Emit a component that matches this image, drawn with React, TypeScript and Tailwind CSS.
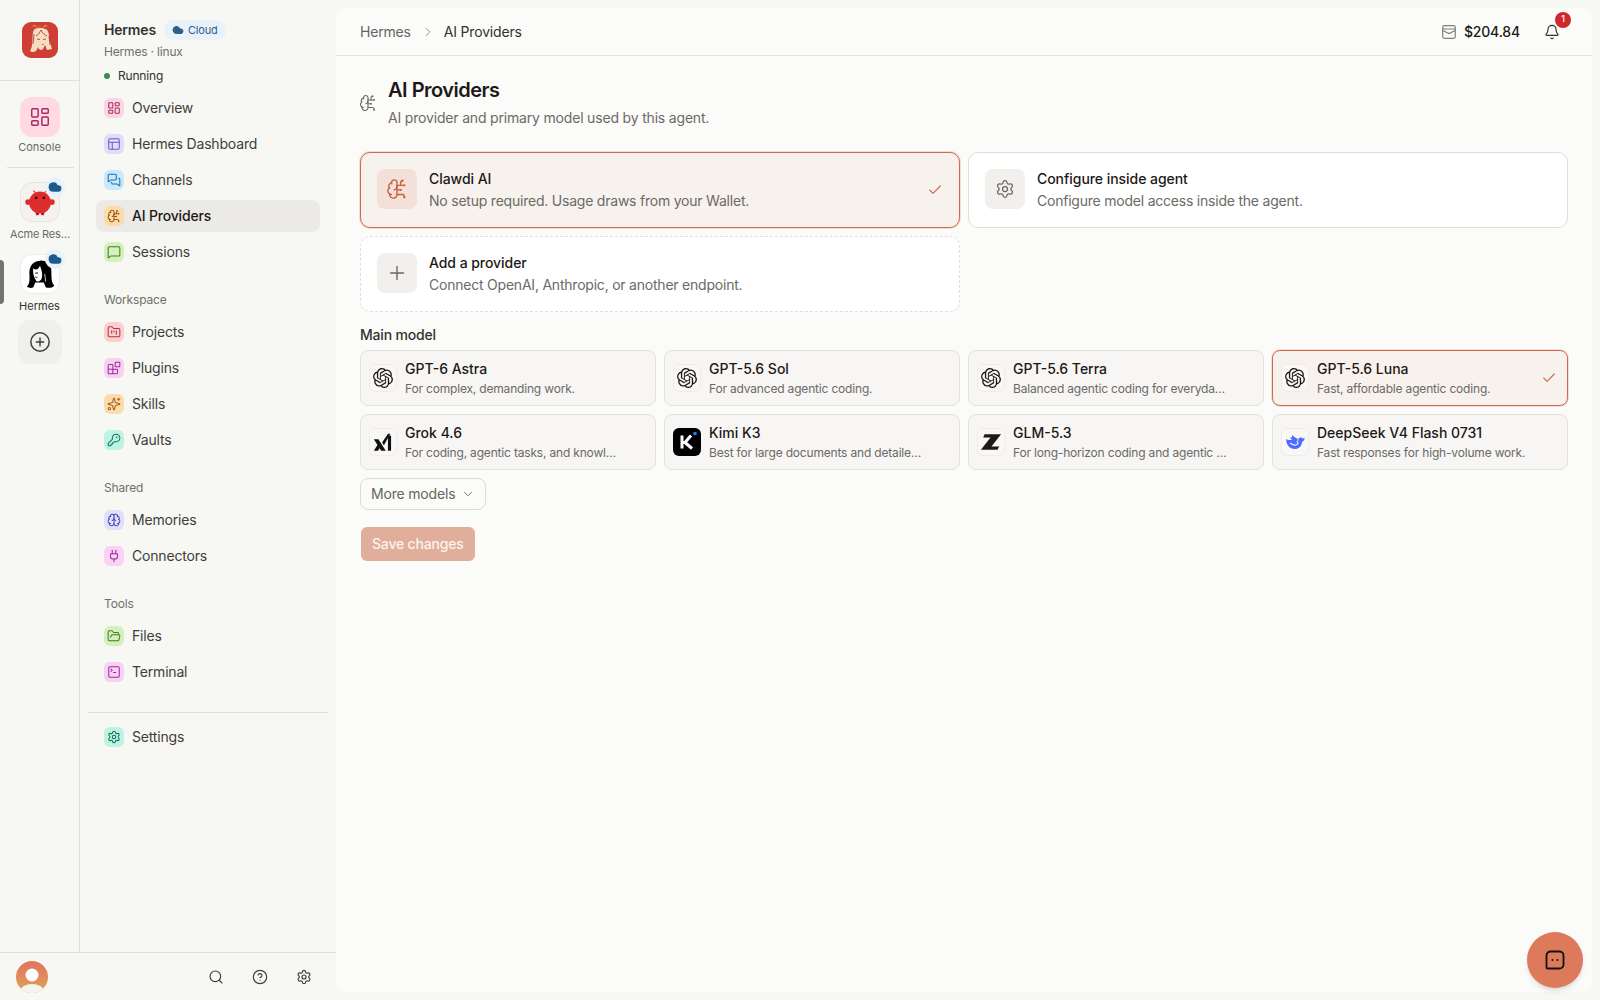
import React from 'react';
import {
  Bell, Blocks, Brain, BrainCircuit, Check, ChevronDown, ChevronRight, CircleHelp, CirclePlus, Cloud,
  FolderKanban, FolderOpen, KeyRound, LayoutDashboard, MessageSquare, MessagesSquare, PanelsTopLeft,
  Plug, Plus, Search, Settings, Sparkles, SquareTerminal,
} from 'lucide-react';

type NavItem = { label: string; icon: React.ElementType; tile: string; active?: boolean };

const mainNav: NavItem[] = [
  { label: 'Overview', icon: LayoutDashboard, tile: 'bg-[#fbd5e3] text-[#a82a5e]' },
  { label: 'Hermes Dashboard', icon: PanelsTopLeft, tile: 'bg-[#e0dcfb] text-[#6a5bc0]' },
  { label: 'Channels', icon: MessagesSquare, tile: 'bg-[#c8e8fb] text-[#1f6ea8]' },
  { label: 'AI Providers', icon: BrainCircuit, tile: 'bg-[#fddcab] text-[#9a5a12]', active: true },
  { label: 'Sessions', icon: MessageSquare, tile: 'bg-[#d5f0bd] text-[#3f7a22]' },
];
const workspaceNav: NavItem[] = [
  { label: 'Projects', icon: FolderKanban, tile: 'bg-[#fcd0d0] text-[#b4323c]' },
  { label: 'Plugins', icon: Blocks, tile: 'bg-[#f8d0f5] text-[#9a2d94]' },
  { label: 'Skills', icon: Sparkles, tile: 'bg-[#fddcab] text-[#a0601a]' },
  { label: 'Vaults', icon: KeyRound, tile: 'bg-[#bff3e1] text-[#0f7060]' },
];
const sharedNav: NavItem[] = [
  { label: 'Memories', icon: Brain, tile: 'bg-[#e0e0fd] text-[#4f46b0]' },
  { label: 'Connectors', icon: Plug, tile: 'bg-[#fad2f8] text-[#9a2a92]' },
];
const toolsNav: NavItem[] = [
  { label: 'Files', icon: FolderOpen, tile: 'bg-[#d5f0bd] text-[#3f7a22]' },
  { label: 'Terminal', icon: SquareTerminal, tile: 'bg-[#f8d0f5] text-[#9a2d94]' },
];

const OpenAILogo = () => (
  <svg viewBox="0 0 24 24" className="w-[20px] h-[20px]" fill="#1c1917">
    <path d="M22.2819 9.8211a5.9847 5.9847 0 0 0-.5157-4.9108 6.0462 6.0462 0 0 0-6.5098-2.9A6.0651 6.0651 0 0 0 4.9807 4.1818a5.9847 5.9847 0 0 0-3.9977 2.9 6.0462 6.0462 0 0 0 .7427 7.0966 5.98 5.98 0 0 0 .511 4.9107 6.051 6.051 0 0 0 6.5146 2.9001A5.9847 5.9847 0 0 0 13.2599 24a6.0557 6.0557 0 0 0 5.7718-4.2058 5.9894 5.9894 0 0 0 3.9977-2.9001 6.0557 6.0557 0 0 0-.7475-7.0729zm-9.022 12.6081a4.4755 4.4755 0 0 1-2.8764-1.0408l.1419-.0804 4.7783-2.7582a.7948.7948 0 0 0 .3927-.6813v-6.7369l2.02 1.1686a.071.071 0 0 1 .038.052v5.5826a4.504 4.504 0 0 1-4.4945 4.4944zm-9.6607-4.1254a4.4708 4.4708 0 0 1-.5346-3.0137l.142.0852 4.783 2.7582a.7712.7712 0 0 0 .7806 0l5.8428-3.3685v2.3324a.0804.0804 0 0 1-.0332.0615L9.74 19.9502a4.4992 4.4992 0 0 1-6.1408-1.6464zM2.3408 7.8956a4.485 4.485 0 0 1 2.3655-1.9728V11.6a.7664.7664 0 0 0 .3879.6765l5.8144 3.3543-2.0201 1.1685a.0757.0757 0 0 1-.071 0l-4.8303-2.7865A4.504 4.504 0 0 1 2.3408 7.872zm16.5963 3.8558L13.1038 8.364 15.1192 7.2a.0757.0757 0 0 1 .071 0l4.8303 2.7913a4.4944 4.4944 0 0 1-.6765 8.1042v-5.6772a.79.79 0 0 0-.407-.667zm2.0107-3.0231l-.142-.0852-4.7735-2.7818a.7759.7759 0 0 0-.7854 0L9.409 9.2297V6.8974a.0662.0662 0 0 1 .0284-.0615l4.8303-2.7866a4.4992 4.4992 0 0 1 6.6802 4.66zM8.3065 12.863l-2.02-1.1638a.0804.0804 0 0 1-.038-.0567V6.0742a4.4992 4.4992 0 0 1 7.3757-3.4537l-.142.0805L8.704 5.459a.7948.7948 0 0 0-.3927.6813zm1.0976-2.3654l2.602-1.4998 2.6069 1.4998v2.9994l-2.5974 1.4997-2.6067-1.4997Z" />
  </svg>
);

const GrokLogo = () => (
  <svg viewBox="0 0 24 24" className="w-[22px] h-[22px]" fill="#111">
    <polygon points="2,9 7,9 15,21.500 10,21.500" />
    <polygon points="2,21.500 6.500,21.500 9,17.800 6.600,14.300" />
    <polygon points="11,12.500 17.500,3 20,3 13,15.500" />
    <rect x="17.400" y="5" width="3.400" height="16.500" />
  </svg>
);

const KimiLogo = () => (
  <svg viewBox="0 0 28 28" className="w-[28px] h-[28px]">
    <rect width="28" height="28" rx="6" fill="#000" />
    <path d="M9 7.500v13M9 14.500h3l6-7M12 14.500l7 6" stroke="#fff" strokeWidth="3" fill="none" />
    <circle cx="22" cy="5.500" r="1.800" fill="#1783ff" />
  </svg>
);

const GlmLogo = () => (
  <svg viewBox="0 0 24 24" className="w-[22px] h-[22px]" fill="#1c1917">
    <polygon points="5,3.500 23,3.500 12.500,17 21,17 19,20.500 1,20.500 11.500,7 3.500,7" />
  </svg>
);

const DeepSeekLogo = () => (
  <svg viewBox="0 0 24 24" className="w-[20px] h-[20px]" fill="#4d6bfe">
    <path d="M1.500 8.500C1 15 5.500 20.500 12 20.500c4.500 0 7.500-3 8.300-7.500.2-1.300.9-1.800 2-2.500.8-.6 1.200-2 1.200-3.500-.8.7-1.800 1-2.800.9-.3-1-1-1.700-2-2 0 .6-.1 1-.4 1.400-1-.2-2 .2-2.600 1.200C13 7 10.500 5.500 8.500 3.500c-.4 1-.2 2 .5 3-1-.2-2 0-2.800.5.5 1 1.300 1.800 2.500 2.500C5.500 10 3 9.500 1.500 8.500z" />
    <path d="M6 13c3 3 7 3.500 9 1.500 1-1 .5-2.500-1-3" stroke="#fff" fill="none" strokeWidth="1.300" />
    <circle cx="15.500" cy="9.500" r="0.900" fill="#fff" />
  </svg>
);

const models = [
  { name: 'GPT-6 Astra', desc: 'For complex, demanding work.', logo: <OpenAILogo /> },
  { name: 'GPT-5.6 Sol', desc: 'For advanced agentic coding.', logo: <OpenAILogo /> },
  { name: 'GPT-5.6 Terra', desc: 'Balanced agentic coding for everyda…', logo: <OpenAILogo /> },
  { name: 'GPT-5.6 Luna', desc: 'Fast, affordable agentic coding.', logo: <OpenAILogo />, selected: true },
  { name: 'Grok 4.6', desc: 'For coding, agentic tasks, and knowl…', logo: <GrokLogo /> },
  { name: 'Kimi K3', desc: 'Best for large documents and detaile…', logo: <KimiLogo />, bare: true },
  { name: 'GLM-5.3', desc: 'For long-horizon coding and agentic …', logo: <GlmLogo /> },
  { name: 'DeepSeek V4 Flash 0731', desc: 'Fast responses for high-volume work.', logo: <DeepSeekLogo /> },
];

const BrandAvatar = () => (
  <svg viewBox="0 0 36 36" className="w-[36px] h-[36px] rounded-[9px]">
    <rect width="36" height="36" fill="#cf3f33" />
    <path d="M11 4.500c1-2 3-1 3 .5M25 4.500c-1-2-3-1-3 .5" stroke="#f3c9b0" fill="none" strokeWidth="0.800" />
    <path d="M11 10c1-4 5-6 8-5 5 0 8 4 8 9 0 5 2 9 3 13l-5 1-2-5-2 4c-2 2-4 1-5-2-1 3-2 5-6 5l-2-1c3-4 2-11 3-19z" fill="#f6dcc0" />
    <path d="M14 14c2-1 4-4 5-6 1 3 4 5 6 6M15 17l3 .5M21 17.500l3-.5M20 22.500h1.500M12 12l-1 10M27 14l1 9" stroke="#a8352c" strokeWidth="0.800" fill="none" />
    <path d="M12 7c3-2 9-2 12 0" stroke="#c23a30" strokeWidth="1" fill="none" />
  </svg>
);

const MascotAvatar = () => (
  <svg viewBox="0 0 40 40" className="w-[38px] h-[38px]">
    <ellipse cx="7.500" cy="20" rx="3" ry="3" fill="#d92b2b" />
    <ellipse cx="32.500" cy="20" rx="3" ry="3" fill="#d92b2b" />
    <path d="M15 10l-2-2M25 10l2-2" stroke="#e03a3a" strokeWidth="1.200" />
    <rect x="15.500" y="29" width="3.500" height="5" rx="1.500" fill="#b81e1e" />
    <rect x="21" y="29" width="3.500" height="5" rx="1.500" fill="#b81e1e" />
    <circle cx="20" cy="20.500" r="11.500" fill="#dd2c2c" />
    <circle cx="16" cy="15.500" r="1.400" fill="#2a1414" />
    <circle cx="24" cy="15.500" r="1.400" fill="#2a1414" />
  </svg>
);

const HermesAvatar = () => (
  <svg viewBox="0 0 40 40" className="w-[38px] h-[38px]">
    <path d="M6 33c3-2 3-6 3-11-1-9 2-15 11-16 8-1 12 4 12 11 0 7 0 12 3 15-2 3-7 3-9 2l-2-5H15l-2 5c-2 1-5 1-7-1z" fill="#000" />
    <path d="M13 14c3 3 6 0 7-3 1 4 3 7 2 13-1 4-5 5-6 3-2-3-4-8-3-13z" fill="#fff" />
    <path d="M15 19h3M15 23c1 1 2 1 2 0M25 14l1 14M28 16l-1 11" stroke="#000" strokeWidth="1" fill="none" />
    <path d="M25 20l1 8" stroke="#fff" strokeWidth="0.800" fill="none" />
    <path d="M13 7c4-3 10-3 14 0" stroke="#fff" strokeWidth="1" fill="none" />
  </svg>
);

const CloudBadge = () => (
  <span className="absolute -top-[6px] -right-[6px] w-[20px] h-[20px] rounded-full bg-[#e8f2fb] flex items-center justify-center">
    <Cloud size={14} className="text-[#1f5a8a]" fill="currentColor" />
  </span>
);

const NavRow = ({ item }: { item: NavItem }) => {
  const Icon = item.icon;
  return (
    <div className={`flex items-center gap-2 h-8 px-2 rounded-lg ${item.active ? 'bg-[#ebeae6] text-[#1c1917] font-medium' : 'text-[#3f3e3a]'}`}>
      <span className={`w-5 h-5 rounded-md flex items-center justify-center ${item.tile}`}>
        <Icon size={14} strokeWidth={1.75} />
      </span>
      <span className="text-sm">{item.label}</span>
    </div>
  );
};

const NavSection = ({ title, items }: { title: string; items: NavItem[] }) => (
  <div className="mt-6">
    <div className="px-2 h-4 leading-4 text-xs text-[#706f6a] mb-2">{title}</div>
    <div className="flex flex-col gap-1">
      {items.map((item) => <NavRow key={item.label} item={item} />)}
    </div>
  </div>
);

const Rail = () => (
  <div className="w-[80px] shrink-0 border-r border-[#e0dfdb] flex flex-col">
    <div className="h-[81px] shrink-0 border-b border-[#e0dfdb] flex items-center justify-center pl-px">
      <BrandAvatar />
    </div>
    <div className="flex flex-col items-center pl-px">
      <div className="mt-4 w-10 h-10 rounded-xl bg-[#ffd9e4] text-[#a82a5e] flex items-center justify-center">
        <LayoutDashboard size={22} strokeWidth={1.6} />
      </div>
      <div className="mt-[2px] -ml-px h-4 leading-4 text-[11px] tracking-normal text-[#6b6a65]">Console</div>
      <div className="mt-3 w-[67px] h-px bg-[#e0dfdb]" />
      <div className="relative mt-[14px] w-10 h-10 rounded-xl bg-[#f3f2ef] border border-[#e6e5e1] flex items-center justify-center">
        <MascotAvatar />
        <CloudBadge />
      </div>
      <div className="mt-1 h-4 leading-4 text-[11px] text-[#6b6a65] text-center">Acme Res…</div>
      <div className="relative mt-3 w-10 h-10 rounded-xl bg-white border border-[#ecebe7] flex items-center justify-center">
        <HermesAvatar />
        <CloudBadge />
      </div>
      <div className="mt-1 -ml-px h-4 leading-4 text-[11px] tracking-normal text-[#33322e]">Hermes</div>
      <div className="mt-[6px] w-11 h-11 rounded-xl bg-[#efefec] text-[#3f3e3a] flex items-center justify-center">
        <CirclePlus size={22} strokeWidth={1.6} />
      </div>
    </div>
    <span className="absolute left-0 top-[260px] w-1 h-[44px] rounded-r bg-[#74736c]" />
  </div>
);

const Sidebar = () => (
  <div className="flex-1 min-w-0 px-4 pt-5 flex flex-col">
    <div className="px-2">
      <div className="flex items-center gap-2 h-5">
        <span className="text-sm font-semibold text-[#33322e]">Hermes</span>
        <span className="h-5 px-2 rounded-full bg-[#e8f2fb] text-[#2d5f8a] flex items-center gap-1 text-[11px]">
          <Cloud size={12} fill="currentColor" /> Cloud
        </span>
      </div>
      <div className="mt-[4px] h-4 leading-4 text-xs text-[#706f6a]">Hermes · linux</div>
      <div className="mt-[8px] h-4 leading-4 flex items-center gap-2 text-xs text-[#33322e]">
        <span className="w-[6px] h-[6px] rounded-full bg-[#3f8a55]" /> Running
      </div>
    </div>
    <div className="mt-2 flex flex-col gap-1">
      {mainNav.map((item) => <NavRow key={item.label} item={item} />)}
    </div>
    <NavSection title="Workspace" items={workspaceNav} />
    <NavSection title="Shared" items={sharedNav} />
    <NavSection title="Tools" items={toolsNav} />
    <div className="mt-6 -mx-2 h-px bg-[#e0dfdb]" />
    <div className="mt-2">
      <NavRow item={{ label: 'Settings', icon: Settings, tile: 'bg-[#bff3e1] text-[#0f7060]' }} />
    </div>
  </div>
);

const Footer = () => (
  <div className="h-[48px] shrink-0 border-t border-[#e0dfdb] flex items-center pl-4 pr-[24px]">
    <svg viewBox="0 0 32 32" className="w-8 h-8 rounded-full">
      <defs>
        <linearGradient id="avatarBg" x1="0" y1="0" x2="0" y2="1">
          <stop offset="0" stopColor="#e0735a" />
          <stop offset="1" stopColor="#dea35c" />
        </linearGradient>
      </defs>
      <rect width="32" height="32" fill="url(#avatarBg)" />
      <circle cx="16" cy="14" r="6.500" fill="#fff" />
      <ellipse cx="16" cy="30" rx="11.500" ry="7" fill="#f5f4f0" />
    </svg>
    <div className="ml-auto flex items-center gap-7 text-[#3f3e3a]">
      <Search size={16} strokeWidth={1.75} />
      <CircleHelp size={16} strokeWidth={1.75} />
      <Settings size={16} strokeWidth={1.75} />
    </div>
  </div>
);

const WalletIcon = () => (
  <svg viewBox="0 0 14 14" className="w-[14px] h-[14px]" fill="none" stroke="#80807a" strokeWidth="1.200">
    <rect x="0.700" y="0.700" width="12.600" height="12.600" rx="1.800" />
    <path d="M0.700 4h12.600M0.700 5.500l6.300 3 6.300-3" />
  </svg>
);

const ProviderCard = ({ icon, title, sub, tone }: { icon: React.ReactNode; title: string; sub: string; tone: 'selected' | 'plain' | 'dashed' }) => (
  <div className={`h-[76px] rounded-[10px] flex items-center px-4 border ${
    tone === 'selected' ? 'bg-[#f7f2ee] border-[#d4694a] shadow-[0_0_0_1px_rgba(212,105,74,0.2)]' : tone === 'dashed' ? 'bg-white border-dashed border-[#dfdedb]' : 'bg-white border-[#dfdedb]'
  }`}>
    <span className={`w-10 h-10 mb-[2px] rounded-lg flex items-center justify-center ${tone === 'selected' ? 'bg-[#f3e0d8] text-[#cc5f3e]' : 'bg-[#f1f0ed] text-[#66655f]'}`}>{icon}</span>
    <div className="ml-3 flex-1 min-w-0">
      <div className="text-sm font-medium text-[#1c1917] leading-5 tracking-[-0.05px]">{title}</div>
      <div className="text-sm text-[#6b6a65] leading-5 mt-[2px] tracking-[-0.22px]">{sub}</div>
    </div>
    {tone === 'selected' && <Check size={16} strokeWidth={1.75} className="text-[#d4694a]" />}
  </div>
);

const ModelCard = ({ name, desc, logo, selected, bare }: typeof models[number] & { selected?: boolean; bare?: boolean }) => (
  <div className={`h-[56px] rounded-[8px] border flex items-center pl-2 pr-[10px] ${selected ? 'bg-[#f7f2ee] border-[#d4694a] shadow-[0_0_0_1px_rgba(212,105,74,0.2)]' : 'bg-[#f7f6f4] border-[#e2e1de]'}`}>
    <span className={`w-7 h-7 shrink-0 rounded-md flex items-center justify-center ${bare ? '' : 'bg-[#f9f8f6] border border-[#eeedea]'}`}>{logo}</span>
    <div className="ml-2 flex-1 min-w-0">
      <div className="text-sm font-medium text-[#1c1917] leading-5 tracking-normal">{name}</div>
      <div className="text-xs text-[#6b6a65] leading-4 mt-[2px] whitespace-nowrap">{desc}</div>
    </div>
    {selected && <Check size={16} strokeWidth={1.75} className="text-[#d4694a]" />}
  </div>
);

export default function App() {
  return (
    <div className="relative h-screen flex bg-[#f7f7f4] font-[Inter,sans-serif] tracking-[-0.18px] overflow-hidden">
      <div className="w-[336px] shrink-0 flex flex-col">
        <div className="flex-1 min-h-0 flex">
          <Rail />
          <Sidebar />
        </div>
        <Footer />
      </div>

      <main className="flex-1 min-w-0 mt-2 mr-2 mb-2 rounded-xl bg-[#fbfbf9] flex flex-col">
        <header className="h-[48px] shrink-0 border-b border-[#e4e3df] flex items-center px-6 text-sm">
          <span className="text-[#66655f]">Hermes</span>
          <ChevronRight size={14} strokeWidth={1.5} className="text-[#80807a] ml-[10px] mr-[9px]" />
          <span className="text-[#33322e]">AI Providers</span>
          <div className="ml-auto flex items-center">
            <WalletIcon />
            <span className="ml-2 font-medium text-[#1c1917]">$204.84</span>
            <span className="relative ml-6 mr-2 text-[#33322e] flex">
              <Bell size={16} strokeWidth={1.75} />
              <span className="absolute -top-[12px] -right-[11px] w-4 h-4 rounded-full bg-[#d0282e] text-white text-[9px] font-medium flex items-center justify-center">1</span>
            </span>
          </div>
        </header>

        <div className="px-6 pt-5">
          <div className="flex items-center mb-6">
            <BrainCircuit size={18} strokeWidth={1.5} className="text-[#6b6a65] -ml-[1px] mt-[2px]" />
            <div className="ml-[11px]">
              <h1 className="text-xl font-semibold text-[#1c1917] leading-7 tracking-[-0.5px]">AI Providers</h1>
              <p className="text-sm text-[#6b6a65] leading-5 mt-1">AI provider and primary model used by this agent.</p>
            </div>
          </div>

          <div className="grid grid-cols-2 gap-2">
            <ProviderCard tone="selected" icon={<BrainCircuit size={22} strokeWidth={1.5} />} title="Clawdi AI" sub="No setup required. Usage draws from your Wallet." />
            <ProviderCard tone="plain" icon={<Settings size={20} strokeWidth={1.5} />} title="Configure inside agent" sub="Configure model access inside the agent." />
            <ProviderCard tone="dashed" icon={<Plus size={22} strokeWidth={1.5} />} title="Add a provider" sub="Connect OpenAI, Anthropic, or another endpoint." />
          </div>

          <div className="mt-[13px] mb-[5px] text-sm font-medium text-[#33322e] leading-5">Main model</div>
          <div className="grid grid-cols-4 gap-2">
            {models.map((model) => <ModelCard key={model.name} {...model} />)}
          </div>

          <button className="mt-2 h-8 px-[10px] rounded-lg border border-[#dcdbd7] text-sm text-[#66655f] flex items-center gap-[6px]">
            More models <ChevronDown size={14} strokeWidth={1.5} />
          </button>
          <button className="mt-[17px] ml-px h-[34px] px-[11px] rounded-md bg-[#e0ae9b] text-sm font-medium text-[#fbf3ee]">Save changes</button>
        </div>
      </main>

      <button className="absolute left-[1527px] top-[932px] w-14 h-14 rounded-full bg-[#dd7a5b] shadow-md flex items-center justify-center">
        <svg viewBox="0 0 20 20" className="w-5 h-5" fill="none" stroke="#111" strokeWidth="1.800">
          <path d="M5.500 1.500h9a4 4 0 0 1 4 4v9a4 4 0 0 1-4 4H2.500a1 1 0 0 1-1-1V5.500a4 4 0 0 1 4-4z" />
          <circle cx="7.500" cy="10" r="1" fill="#111" stroke="none" />
          <circle cx="12.500" cy="10" r="1" fill="#111" stroke="none" />
        </svg>
      </button>
    </div>
  );
}
